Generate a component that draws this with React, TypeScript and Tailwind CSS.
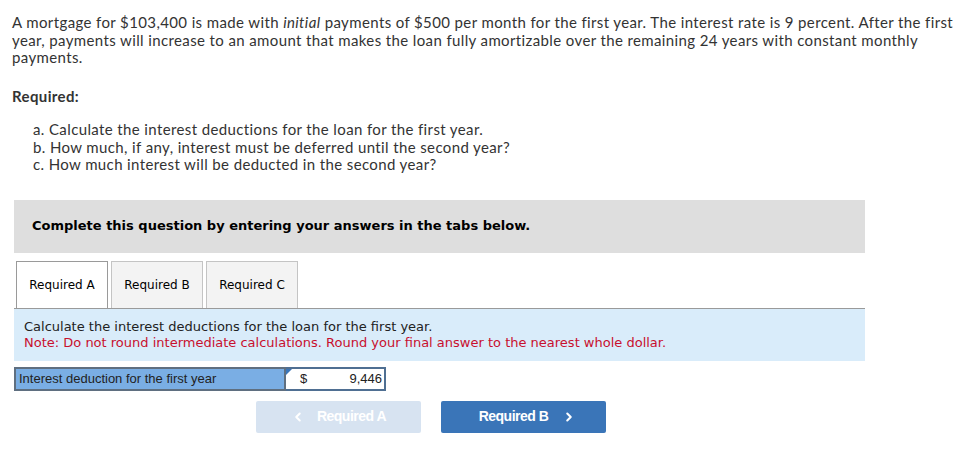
import { ChevronLeft, ChevronRight } from 'lucide-react';

const tabs = ['Required A', 'Required B', 'Required C'];

export default function App() {
    return (
        <div className="min-h-screen bg-white text-[#333] pt-[14px] pl-[12px] pr-[20px]" style={{ fontFamily: 'Lato, "Open Sans", sans-serif' }}>
            {/* Question */}
            <div className="text-[15px] leading-[17.5px] tracking-[0.38px]">
                <p>
                    A mortgage for $103,400 is made with <i>initial</i> payments of $500 per month for the first year. The interest rate is 9 percent. After the first year, payments will increase to an amount that makes the loan fully amortizable over the remaining 24 years with constant monthly payments.
                </p>

                <p className="mt-[21px] font-bold">Required:</p>

                <div className="mt-[16px] pl-[21px]">
                    <p>a. Calculate the interest deductions for the loan for the first year.</p>
                    <p>b. How much, if any, interest must be deferred until the second year?</p>
                    <p>c. How much interest will be deducted in the second year?</p>
                </div>
            </div>

            <div className="w-[851px] ml-[2px]">
                {/* Instruction bar */}
                <div className="mt-[26px] h-[53px] bg-[#dedede] flex items-center pl-[18px]" style={{ fontFamily: '"DejaVu Sans", Verdana, sans-serif' }}>
                    <span className="text-[13px] font-bold text-black">Complete this question by entering your answers in the tabs below.</span>
                </div>

                {/* Tabs */}
                <div className="mt-[8px] flex gap-[3px] pl-[2px] border-b border-[#9a9a9a]" style={{ fontFamily: '"DejaVu Sans", Tahoma, sans-serif' }}>
                    {tabs.map((t, i) => (
                        <div
                            key={t}
                            className={`w-[92px] h-[47px] flex items-center justify-center text-[12px] text-black border border-b-0 ${
                                i === 0 ? 'bg-white border-[#9a9a9a]' : 'bg-[#f3f3f3] border-[#c4c4c4]'
                            }`}
                        >
                            {t}
                        </div>
                    ))}
                </div>

                {/* Tab content */}
                <div className="h-[52px] bg-[#d9ecfa] pl-[10px] pt-[10px] text-[13px] leading-[16px]" style={{ fontFamily: '"DejaVu Sans", Verdana, sans-serif' }}>
                    <p className="text-[#222]">Calculate the interest deductions for the loan for the first year.</p>
                    <p className="text-[#c8102e]">Note: Do not round intermediate calculations. Round your final answer to the nearest whole dollar.</p>
                </div>

                <div className="mt-[6px] flex" style={{ fontFamily: '"Liberation Sans", Arial, sans-serif' }}>
                    <div className="w-[272px] h-[24px] bg-[#7aaee4] border-2 border-[#5f6f80] flex items-center pl-[3px] text-[13px] text-[#222]">
                        Interest deduction for the first year
                    </div>
                    <div className="relative w-[100px] h-[24px] bg-white border-2 border-[#4f6f92] border-l-0 flex items-center justify-between pl-[14px] pr-[2px] text-[13px] text-[#222]">
                        <span className="absolute left-0 top-0 w-0 h-0 border-t-[6px] border-r-[6px] border-t-[#3a75b8] border-r-transparent" />
                        <span>$</span>
                        <span>9,446</span>
                    </div>
                </div>

                {/* Navigation */}
                <div className="mt-[10px] flex gap-[20px] pl-[242px]" style={{ fontFamily: '"Liberation Sans", Arial, sans-serif' }}>
                    <button className="w-[165px] h-[32px] rounded-[2px] bg-[#d7e3f1] text-white font-bold text-[14px] tracking-[-0.5px] flex items-center justify-center gap-[12px]">
                        <ChevronLeft className="w-[14px] h-[14px]" strokeWidth={3.5} />
                        Required A
                    </button>
                    <button className="w-[165px] h-[32px] rounded-[2px] bg-[#3a75b8] text-white font-bold text-[14px] tracking-[-0.5px] flex items-center justify-center gap-[14px] pl-[8px]">
                        Required B
                        <ChevronRight className="w-[14px] h-[14px]" strokeWidth={3.5} />
                    </button>
                </div>
            </div>
        </div>
    );
}
